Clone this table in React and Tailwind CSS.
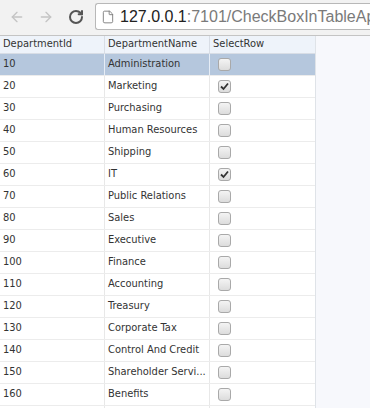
import { ArrowLeft, ArrowRight, RotateCw, File } from 'lucide-react'

const ROWS = [
  [10, 'Administration', false],
  [20, 'Marketing', true],
  [30, 'Purchasing', false],
  [40, 'Human Resources', false],
  [50, 'Shipping', false],
  [60, 'IT', true],
  [70, 'Public Relations', false],
  [80, 'Sales', false],
  [90, 'Executive', false],
  [100, 'Finance', false],
  [110, 'Accounting', false],
  [120, 'Treasury', false],
  [130, 'Corporate Tax', false],
  [140, 'Control And Credit', false],
  [150, 'Shareholder Servi...', false],
  [160, 'Benefits', false],
  [170, 'Manufacturing', false],
]

function Check({ checked }) {
  return (
    <span className="w-[13px] h-[13px] rounded-[3px] border border-[#a9a9a9] bg-gradient-to-b from-[#f4f4f4] to-[#dcdcdc] flex items-center justify-center">
      {checked && (
        <svg width="9" height="9" viewBox="0 0 9 9">
          <path d="M1 4.5 L3.5 7 L8 1.5" fill="none" stroke="#333" strokeWidth="1.8" />
        </svg>
      )}
    </span>
  )
}

export default function App() {
  return (
    <div className="w-[370px] h-[408px] overflow-hidden bg-[#f7f8fc] font-['DejaVu_Sans_Condensed','DejaVu_Sans',sans-serif]">
      <div className="h-[36px] bg-[#f2f2f2] border-b border-[#c4c4c4] flex items-start pt-[3px]">
        <ArrowLeft size={16} strokeWidth={2} className="mt-[6px] ml-[9px] text-[#c4c4c4]" />
        <ArrowRight size={16} strokeWidth={2} className="mt-[6px] ml-[13px] text-[#c4c4c4]" />
        <RotateCw size={16} strokeWidth={3} className="mt-[6px] ml-[14px] text-[#555]" />
        <div className="ml-[11px] h-[27px] flex-1 bg-white border border-r-0 border-[#b8b8b8] rounded-l-[3px] flex items-center pl-[5px] gap-[5px] font-['Liberation_Sans',sans-serif] text-[16px] whitespace-nowrap overflow-hidden">
          <File size={14} strokeWidth={1.5} className="text-[#777] shrink-0" />
          <span><span className="text-[#222]">127.0.0.1</span><span className="text-[#7a7a7a]">:7101/CheckBoxInTableApp</span></span>
        </div>
      </div>
      <div className="w-[316px] bg-white border-r border-[#dfe3e8] text-[11px] text-[#333]">
        <div className="grid grid-cols-[105px_105px_105px] h-[18px] bg-[#eef3fa] border-b border-[#d8dde5]">
          <div className="pl-[3px] border-r border-[#d8dde5] flex items-center">DepartmentId</div>
          <div className="pl-[3px] border-r border-[#d8dde5] flex items-center">DepartmentName</div>
          <div className="pl-[3px] flex items-center">SelectRow</div>
        </div>
        {ROWS.map(([id, name, checked], i) => (
          <div key={id} className={`grid grid-cols-[105px_105px_105px] h-[22px] border-b border-[#ececec] ${i === 0 ? 'bg-[#b5c7dd]' : ''}`}>
            <div className={`pl-[3px] border-r flex items-center ${i === 0 ? 'border-[#e6edf6]' : 'border-[#e8e8e8]'}`}>{id}</div>
            <div className={`pl-[3px] border-r flex items-center whitespace-nowrap overflow-hidden ${i === 0 ? 'border-[#e6edf6]' : 'border-[#e8e8e8]'}`}>{name}</div>
            <div className="pl-[8px] flex items-center"><Check checked={checked} /></div>
          </div>
        ))}
      </div>
    </div>
  )
}
